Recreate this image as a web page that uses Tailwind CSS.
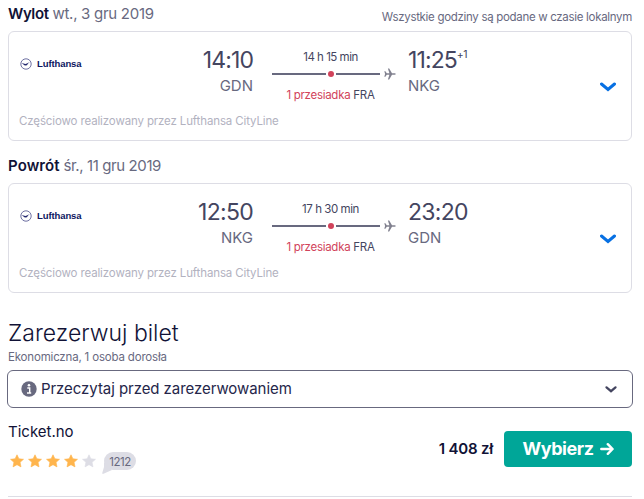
<!DOCTYPE html>
<html lang="pl">
<head>
  <meta charset="UTF-8">
  <title>Zarezerwuj bilet</title>
  <script src="https://cdn.jsdelivr.net/npm/@tailwindcss/browser@4"></script>
</head>
<body class="bg-white text-[#111236] font-['Inter','Liberation_Sans',sans-serif] h-[499px] overflow-hidden">
  <svg class="hidden">
    <symbol id="plane" viewBox="0 0 12 12">
      <path d="M0.3 3.2h1.1L2.8 5.2h2.6L3.9 0.4h1.3L8 5.2h2.7c1.4 0 1.4 1.6 0 1.6H8L5.2 11.6H3.9L5.4 6.8H2.8L1.4 8.8H0.3L1.1 6z" fill="#81818f"/>
    </symbol>
    <symbol id="crane" viewBox="0 0 12 12">
      <circle cx="6" cy="6" r="5.2" fill="none" stroke="#4a4d8c" stroke-width="0.8"/>
      <path d="M1.4 4.9c1.6 0.2 2.7 1 3.9 1 1.3 0 2.4-1.1 4.5-1.700L8 5.500 7 7.200 5.200 7.500C4 7.200 3.100 5.800 1.400 4.900z" fill="#24286f"/>
    </symbol>
    <symbol id="star" viewBox="0 0 14 14">
      <path d="M7 0.8l1.9 4 4.6 0.5-3.4 3 0.9 4.6L7 10.7l-4 2.2 0.9-4.6-3.4-3 4.6-0.5z" fill="currentColor" stroke="currentColor" stroke-width="0.6" stroke-linejoin="round"/>
    </symbol>
  </svg>

  <main class="pl-2 pr-3">
    <!-- Wylot -->
    <section>
      <div class="h-[31px] flex justify-between">
        <h2 class="pt-1 text-[15px] leading-5 tracking-[-0.28px] text-[#68697f] whitespace-nowrap"><b class="font-semibold tracking-[-0.4px] text-[#111236]">Wylot</b> wt., 3 gru 2019</h2>
        <p class="pt-[7px] text-[11.5px] leading-5 tracking-[-0.31px] text-[#68697f] whitespace-nowrap">Wszystkie godziny są podane w czasie lokalnym</p>
      </div>
      <div class="h-[110px] border border-[#dddde5] rounded-md flex flex-col">
        <div class="h-[79px] flex">
          <div class="w-[182px] pl-[11px] pt-[26px] flex gap-[5px]">
            <svg class="w-3 h-3"><use href="#crane"/></svg>
            <span class="font-['Liberation_Sans',sans-serif] text-[9.5px] leading-3 tracking-[-0.1px] font-bold text-[#0c1560]">Lufthansa</span>
          </div>
          <div class="w-[62px] flex flex-col items-end pt-[13px] whitespace-nowrap">
            <span class="text-[23px] leading-[30px] tracking-[-0.9px] text-[#444560]">14:10</span>
            <span class="text-[15px] leading-[22px] text-[#68697f]">GDN</span>
          </div>
          <div class="w-[155px] pl-[19px] pt-[15px] flex flex-col">
            <span class="w-[117px] text-center text-[11.5px] leading-5 tracking-[-0.5px] text-[#444560]">14 h 15 min</span>
            <div class="h-3.5 flex items-center">
              <i class="w-[54px] h-0.5 bg-[#68697f]"></i>
              <i class="w-1.5 h-1.5 mx-0.5 rounded-full bg-[#d1435b]"></i>
              <i class="w-11 h-0.5 bg-[#68697f]"></i>
              <svg class="w-3 h-3 ml-1"><use href="#plane"/></svg>
            </div>
            <span class="w-[117px] pt-1 text-center text-[11.5px] leading-5 tracking-[-0.28px] text-[#444560] whitespace-nowrap"><span class="text-[#d1435b]">1 przesiadka</span> FRA</span>
          </div>
          <div class="flex-1 flex flex-col pt-[13px] whitespace-nowrap">
            <span class="flex text-[23px] leading-[30px] tracking-[-0.9px] text-[#444560]">11:25<span class="text-[10.5px] leading-5 tracking-[-0.5px]">+1</span></span>
            <span class="text-[15px] leading-[22px] text-[#68697f]">NKG</span>
          </div>
          <svg class="w-4 h-4 mt-[47px] mr-[15px]" viewBox="0 0 16 16"><path d="M1.5 5L8 10.500 14.500 5" fill="none" stroke="#0770e3" stroke-width="3" stroke-linecap="round"/></svg>
        </div>
        <p class="pl-2.5 text-[11.5px] leading-5 tracking-[-0.13px] text-[#b2b2bf]">Częściowo realizowany przez Lufthansa CityLine</p>
      </div>
    </section>

    <!-- Powrót -->
    <section>
      <h2 class="h-[42px] pt-[15px] text-[15px] leading-5 tracking-[-0.4px] text-[#68697f] whitespace-nowrap"><b class="font-semibold tracking-[0.1px] text-[#111236]">Powrót</b> śr., 11 gru 2019</h2>
      <div class="h-[110px] border border-[#dddde5] rounded-md flex flex-col">
        <div class="h-[79px] flex">
          <div class="w-[182px] pl-[11px] pt-[26px] flex gap-[5px]">
            <svg class="w-3 h-3"><use href="#crane"/></svg>
            <span class="font-['Liberation_Sans',sans-serif] text-[9.5px] leading-3 tracking-[-0.1px] font-bold text-[#0c1560]">Lufthansa</span>
          </div>
          <div class="w-[62px] flex flex-col items-end pt-[13px] whitespace-nowrap">
            <span class="text-[23px] leading-[30px] tracking-[-0.7px] text-[#444560]">12:50</span>
            <span class="text-[15px] leading-[22px] text-[#68697f]">NKG</span>
          </div>
          <div class="w-[155px] pl-[19px] pt-[15px] flex flex-col">
            <span class="w-[117px] text-center text-[11.5px] leading-5 tracking-[-0.45px] text-[#444560]">17 h 30 min</span>
            <div class="h-3.5 flex items-center">
              <i class="w-[54px] h-0.5 bg-[#68697f]"></i>
              <i class="w-1.5 h-1.5 mx-0.5 rounded-full bg-[#d1435b]"></i>
              <i class="w-11 h-0.5 bg-[#68697f]"></i>
              <svg class="w-3 h-3 ml-1"><use href="#plane"/></svg>
            </div>
            <span class="w-[117px] pt-1 text-center text-[11.5px] leading-5 tracking-[-0.28px] text-[#444560] whitespace-nowrap"><span class="text-[#d1435b]">1 przesiadka</span> FRA</span>
          </div>
          <div class="flex-1 flex flex-col pt-[13px] whitespace-nowrap">
            <span class="text-[23px] leading-[30px] tracking-[-0.7px] text-[#444560]">23:20</span>
            <span class="text-[15px] leading-[22px] text-[#68697f]">GDN</span>
          </div>
          <svg class="w-4 h-4 mt-[47px] mr-[15px]" viewBox="0 0 16 16"><path d="M1.5 5L8 10.500 14.500 5" fill="none" stroke="#0770e3" stroke-width="3" stroke-linecap="round"/></svg>
        </div>
        <p class="pl-2.5 text-[11.5px] leading-5 tracking-[-0.13px] text-[#b2b2bf]">Częściowo realizowany przez Lufthansa CityLine</p>
      </div>
    </section>

    <!-- Rezerwacja -->
    <section>
      <h1 class="pt-[25px] text-[23px] leading-[30px] font-light">Zarezerwuj bilet</h1>
      <p class="h-[22px] text-[11.5px] leading-[18px] tracking-[-0.18px] text-[#68697f]">Ekonomiczna, 1 osoba dorosła</p>
      <button class="-mx-px w-[626px] h-[38px] border border-[#68697f] rounded-md flex items-center pl-[13px] pr-[15px]">
        <svg class="w-4 h-4 mr-1" viewBox="0 0 16 16"><circle cx="8" cy="8" r="7.7" fill="#68697f"/><circle cx="8" cy="4.3" r="1.3" fill="#fff"/><path d="M6.3 7h2.400v4.600M6 12h4.200" fill="none" stroke="#fff" stroke-width="1.4"/></svg>
        <span class="flex-1 text-left text-[15px] leading-5 tracking-[-0.06px] text-[#25264a]">Przeczytaj przed zarezerwowaniem</span>
        <svg class="w-3 h-3" viewBox="0 0 12 12"><path d="M1.5 4.300L6 8.200 10.500 4.300" fill="none" stroke="#444560" stroke-width="2.2" stroke-linecap="round"/></svg>
      </button>
      <div class="h-[89px] border-b border-[#dddde5] flex justify-between">
        <div class="pt-3.5">
          <p class="text-[15px] leading-5">Ticket.no</p>
          <div class="pt-2.5 pl-0.5 flex gap-1 text-[#ffb54d]">
            <svg class="w-3.5 h-3.5 mt-0.5"><use href="#star"/></svg>
            <svg class="w-3.5 h-3.5 mt-0.5"><use href="#star"/></svg>
            <svg class="w-3.5 h-3.5 mt-0.5"><use href="#star"/></svg>
            <svg class="w-3.5 h-3.5 mt-0.5"><use href="#star"/></svg>
            <svg class="w-3.5 h-3.5 mt-0.5 text-[#dddde5]"><use href="#star"/></svg>
            <span class="relative ml-1 w-8 h-[18px] rounded-full bg-[#dddde5] text-center text-[11.5px] leading-[20px] tracking-[-0.5px] text-[#68697f]">
              <svg class="absolute -left-0.5 top-[10px] w-3 h-3" viewBox="0 0 12 12"><path d="M2 0v5L0.3 10.800c-0.200 1 0.400 1.300 1.200 1L10 8z" fill="#dddde5"/></svg>
              <span class="relative">1212</span>
            </span>
          </div>
        </div>
        <div class="pt-[23px] flex gap-[11px]">
          <span class="text-[15px] leading-9 tracking-[-0.2px] font-semibold whitespace-nowrap">1 408 zł</span>
          <button class="w-32 h-9 rounded bg-[#00a698] text-white flex items-center justify-center gap-1.5">
            <span class="text-[18px] leading-6 tracking-[-0.45px] font-bold">Wybierz</span>
            <svg class="w-3.5 h-3.5" viewBox="0 0 14 14"><path d="M1.3 7h11M7.800 2.200L12.600 7 7.800 11.800" fill="none" stroke="#fff" stroke-width="2.4" stroke-linecap="round" stroke-linejoin="round"/></svg>
          </button>
        </div>
      </div>
    </section>
  </main>
</body>
</html>
